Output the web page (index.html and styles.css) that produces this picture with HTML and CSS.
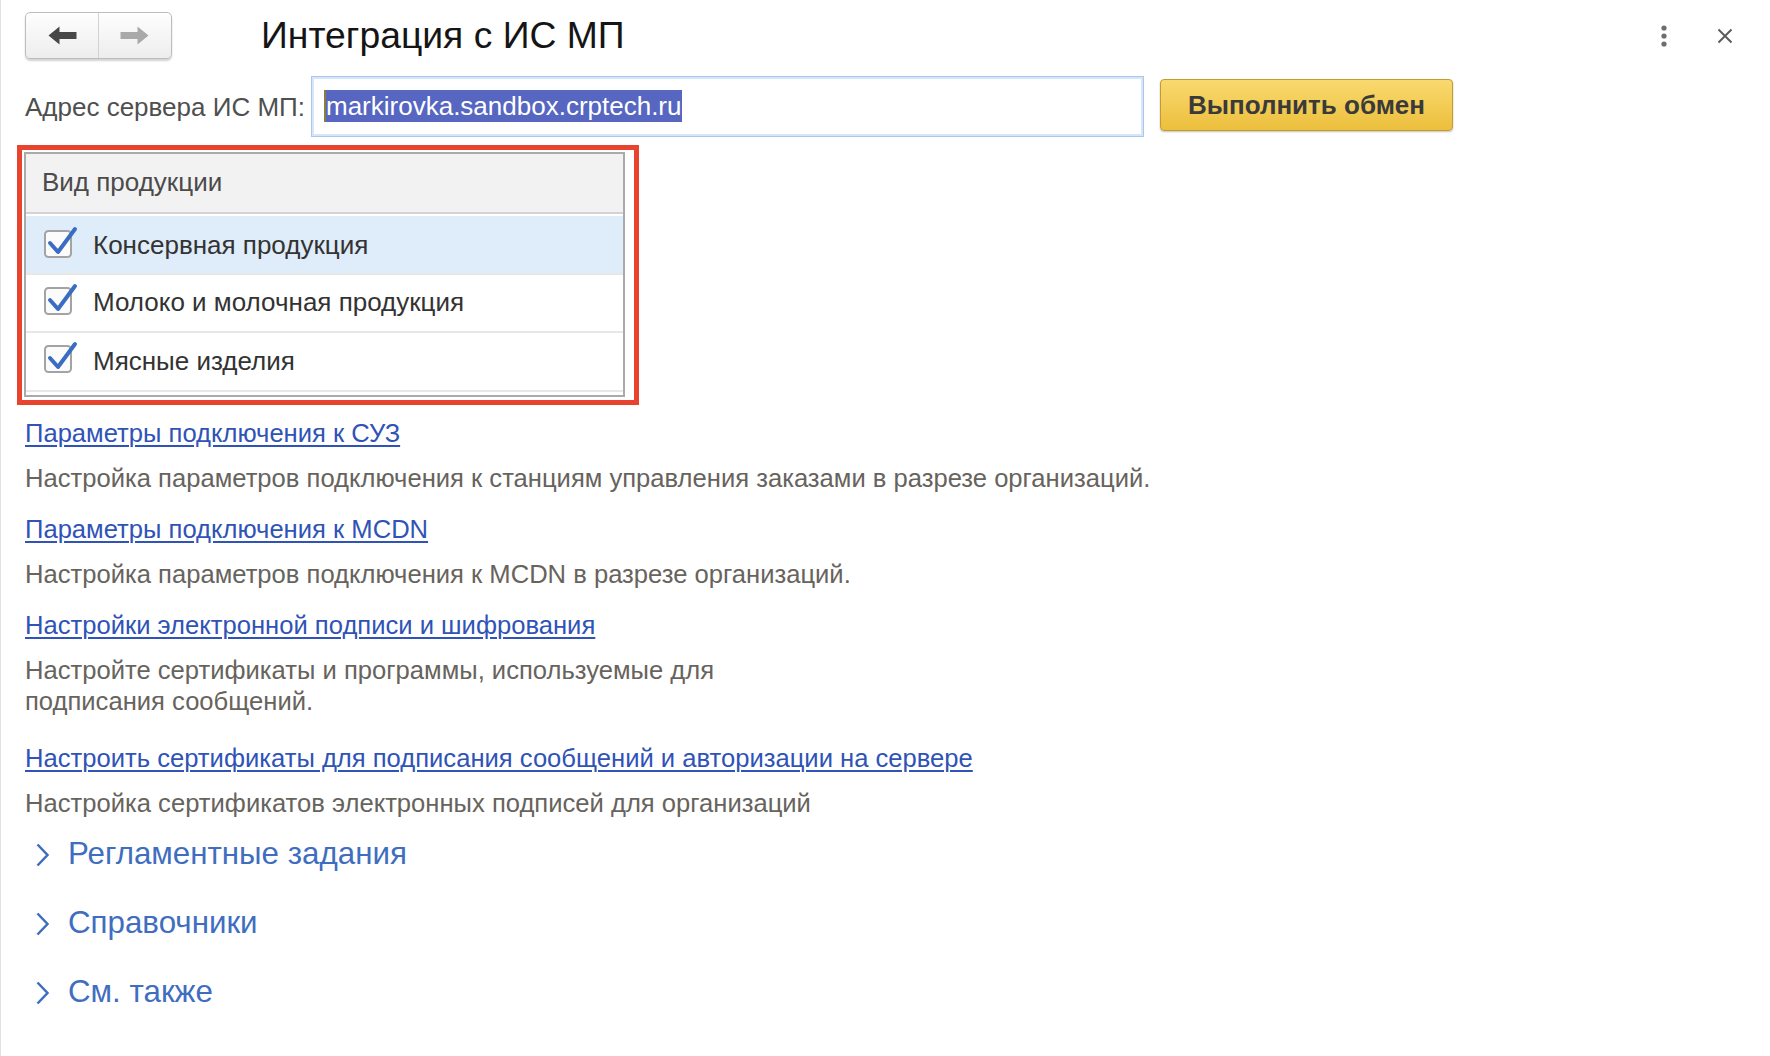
FILE: index.html
```html
<!DOCTYPE html>
<html lang="ru">
<head>
<meta charset="utf-8">
<title>Интеграция с ИС МП</title>
<link rel="stylesheet" href="styles.css">
</head>
<body>
<div class="page">
  <header class="header">
    <div class="nav">
      <button class="nav-btn nav-back" type="button" aria-label="Назад">
        <svg width="29" height="19" viewBox="0 0 29 19"><path d="M0.5 9.5 L11.5 0.5 L11.5 6 L28.5 6 L28.5 13 L11.5 13 L11.5 18.5 Z" fill="#474747"/></svg>
      </button>
      <button class="nav-btn nav-fwd" type="button" aria-label="Вперёд">
        <svg width="29" height="19" viewBox="0 0 29 19"><path d="M28.5 9.5 L17.5 0.5 L17.5 6 L0.5 6 L0.5 13 L17.5 13 L17.5 18.5 Z" fill="#a9a9a9"/></svg>
      </button>
    </div>
    <h1 class="title">Интеграция с ИС МП</h1>
    <div class="win-actions">
      <span class="win-btn">
        <svg width="20" height="24" viewBox="0 0 20 24"><circle cx="10" cy="4" r="2.6" fill="#6d6d6d"/><circle cx="10" cy="12" r="2.6" fill="#6d6d6d"/><circle cx="10" cy="20" r="2.6" fill="#6d6d6d"/></svg>
      </span>
      <span class="win-btn">
        <svg width="20" height="20" viewBox="0 0 20 20"><path d="M3.5 3.5 L16.5 16.5 M16.5 3.5 L3.5 16.5" stroke="#5c5c5c" stroke-width="2" fill="none"/></svg>
      </span>
    </div>
  </header>

  <div class="addr-row">
    <label class="addr-label">Адрес сервера ИС МП:</label>
    <div class="addr-input"><span class="caret"></span><span class="sel">markirovka.sandbox.crptech.ru</span></div>
    <button class="exchange-btn" type="button">Выполнить обмен</button>
  </div>

  <div class="highlight-box">
    <div class="grid">
      <div class="grid-head">Вид продукции</div>
      <div class="grid-body">
        <div class="grid-row selected">
          <span class="cb"><svg width="34" height="34" viewBox="0 0 34 34"><rect x="1" y="5" width="26" height="26" rx="3.5" fill="#fbfbfb" stroke="#a3a3a3" stroke-width="2"/><path d="M6 17 L14 26 L31 3" stroke="#3a6cc2" stroke-width="4" fill="none" stroke-linecap="round" stroke-linejoin="round"/></svg></span>
          <span class="row-text">Консервная продукция</span>
        </div>
        <div class="grid-row">
          <span class="cb"><svg width="34" height="34" viewBox="0 0 34 34"><rect x="1" y="5" width="26" height="26" rx="3.5" fill="#fbfbfb" stroke="#a3a3a3" stroke-width="2"/><path d="M6 17 L14 26 L31 3" stroke="#3a6cc2" stroke-width="4" fill="none" stroke-linecap="round" stroke-linejoin="round"/></svg></span>
          <span class="row-text">Молоко и молочная продукция</span>
        </div>
        <div class="grid-row">
          <span class="cb"><svg width="34" height="34" viewBox="0 0 34 34"><rect x="1" y="5" width="26" height="26" rx="3.5" fill="#fbfbfb" stroke="#a3a3a3" stroke-width="2"/><path d="M6 17 L14 26 L31 3" stroke="#3a6cc2" stroke-width="4" fill="none" stroke-linecap="round" stroke-linejoin="round"/></svg></span>
          <span class="row-text">Мясные изделия</span>
        </div>
        <div class="grid-filler"></div>
      </div>
    </div>
  </div>

  <div class="links">
    <div class="item">
      <a class="link" href="#">Параметры подключения к СУЗ</a>
      <div class="desc">Настройка параметров подключения к станциям управления заказами в разрезе организаций.</div>
    </div>
    <div class="item">
      <a class="link" href="#">Параметры подключения к MCDN</a>
      <div class="desc">Настройка параметров подключения к MCDN в разрезе организаций.</div>
    </div>
    <div class="item">
      <a class="link" href="#">Настройки электронной подписи и шифрования</a>
      <div class="desc desc-narrow">Настройте сертификаты и программы, используемые для подписания сообщений.</div>
    </div>
    <div class="item item-wide-gap">
      <a class="link" href="#">Настроить сертификаты для подписания сообщений и авторизации на сервере</a>
      <div class="desc">Настройка сертификатов электронных подписей для организаций</div>
    </div>
  </div>

  <div class="sections">
    <div class="section">
      <svg class="chev" width="15" height="24" viewBox="0 0 15 24"><path d="M2.5 1.5 L12.5 12 L2.5 22.5" stroke="#3e6dbd" stroke-width="2.5" fill="none"/></svg>
      <span class="section-title">Регламентные задания</span>
    </div>
    <div class="section">
      <svg class="chev" width="15" height="24" viewBox="0 0 15 24"><path d="M2.5 1.5 L12.5 12 L2.5 22.5" stroke="#3e6dbd" stroke-width="2.5" fill="none"/></svg>
      <span class="section-title">Справочники</span>
    </div>
    <div class="section">
      <svg class="chev" width="15" height="24" viewBox="0 0 15 24"><path d="M2.5 1.5 L12.5 12 L2.5 22.5" stroke="#3e6dbd" stroke-width="2.5" fill="none"/></svg>
      <span class="section-title">См. также</span>
    </div>
  </div>
</div>
</body>
</html>
```

FILE: styles.css
```css
* { box-sizing: border-box; }

html, body {
  margin: 0;
  padding: 0;
  background: #ffffff;
}

body {
  font-family: "Liberation Sans", Arial, sans-serif;
  font-size: 26px;
  line-height: 31px;
  color: #333333;
}

.page {
  min-height: 1056px;
  border-left: 1px solid #dde2e9;
  padding-left: 24px;
  padding-top: 12px;
}

/* Header */
.header {
  display: flex;
  align-items: center;
  height: 47px;
}

.nav {
  display: flex;
  width: 147px;
  height: 47px;
  border: 1px solid #bdbdbd;
  border-radius: 5px;
  background: linear-gradient(#fefefe, #ededed);
  box-shadow: 0 2px 2px rgba(0, 0, 0, 0.18);
  overflow: hidden;
}

.nav-btn {
  display: flex;
  align-items: center;
  justify-content: center;
  border: 0;
  padding: 0;
  margin: 0;
  background: transparent;
}

.nav-back {
  width: 73px;
  border-right: 1px solid #d2d2d2;
  padding-left: 1px;
}

.nav-fwd {
  width: 72px;
  padding-right: 1px;
}

.title {
  margin: 0 0 0 89px;
  font-size: 37.3px;
  line-height: 47px;
  font-weight: normal;
  color: #151515;
}

.win-actions {
  margin-left: auto;
  margin-right: 35px;
  display: flex;
  align-items: center;
  gap: 41px;
}

.win-btn {
  display: flex;
  align-items: center;
  justify-content: center;
  width: 20px;
  height: 24px;
}

/* Address row */
.addr-row {
  display: flex;
  align-items: flex-start;
  margin-top: 17px;
}

.addr-label {
  flex: none;
  width: 286px;
  padding-top: 16px;
  color: #4f4f4f;
  white-space: nowrap;
}

.addr-input {
  flex: none;
  display: flex;
  align-items: flex-start;
  width: 833px;
  height: 61px;
  border: 1px solid #a9c8ec;
  box-shadow: inset 0 0 0 2px #d6e6f8;
  padding: 13px 0 0 12px;
  background: #ffffff;
}

.caret {
  width: 2px;
  height: 32px;
  background: #8c7d3c;
}

.sel {
  display: inline-block;
  line-height: 32px;
  height: 32px;
  padding: 0 1px 0 0;
  background: #5666c1;
  color: #ffffff;
}

.exchange-btn {
  flex: none;
  margin: 3px 0 0 16px;
  width: 293px;
  height: 52px;
  border: 1px solid #c49b2e;
  border-radius: 4px;
  background: linear-gradient(#f9d96f, #ecbf3c);
  box-shadow: 0 1px 2px rgba(0, 0, 0, 0.25);
  font-family: "Liberation Sans", Arial, sans-serif;
  font-size: 26px;
  font-weight: bold;
  color: #3a3a3a;
  padding: 0;
}

/* Highlighted table */
.highlight-box {
  width: 622px;
  margin: 8px 0 0 -8px;
  border: 5px solid #e8432e;
  padding: 2px 9px 3px 2px;
}

.grid {
  border: 2px solid #aaaaaa;
}

.grid-head {
  height: 60px;
  background: #f2f2f2;
  border-bottom: 2px solid #d3d3d3;
  padding: 13px 0 0 16px;
  color: #4b4b4b;
}

.grid-body {
  padding-top: 2px;
}

.grid-row {
  display: flex;
  align-items: center;
  height: 58.5px;
  border-bottom: 2px solid #e7e7e7;
  padding-left: 18px;
}

.grid-row.selected {
  background: #dfecf9;
  padding-top: 3px;
}

.cb {
  display: flex;
  width: 34px;
  height: 34px;
  margin-top: -6px;
  flex: none;
}

.row-text {
  margin-left: 15px;
  color: #333333;
}

.grid-filler {
  height: 3.5px;
}

/* Links */
.links {
  margin-top: 13px;
  display: flex;
  flex-direction: column;
  align-items: flex-start;
  gap: 20px;
  font-size: 25.6px;
}

.item {
  display: flex;
  flex-direction: column;
  align-items: flex-start;
}

.item-wide-gap {
  margin-top: 6px;
}

.link {
  color: #2f53b6;
  text-decoration: underline;
  text-decoration-thickness: 2px;
  text-underline-offset: 3px;
}

.desc {
  margin-top: 14px;
  color: #67635d;
}

.desc-narrow {
  max-width: 750px;
}

/* Collapsible sections */
.sections {
  margin-top: 15px;
  display: flex;
  flex-direction: column;
  gap: 29px;
}

.section {
  display: flex;
  align-items: center;
  height: 40px;
  padding-left: 10px;
}

.chev {
  flex: none;
  margin-top: 2px;
}

.section-title {
  margin-left: 18px;
  font-size: 31.3px;
  line-height: 40px;
  color: #3f6ec0;
}
```
